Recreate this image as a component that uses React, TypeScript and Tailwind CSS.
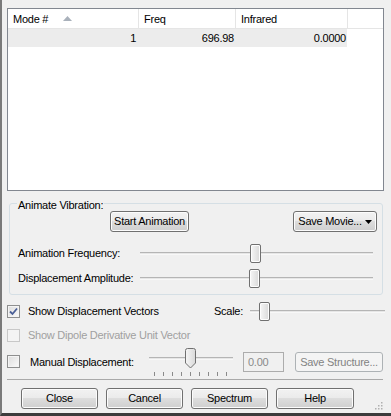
import React from "react";

const btn =
  "h-[21px] flex items-center justify-center rounded-[3px] border border-[#707070] bg-[linear-gradient(#f2f2f2_0%,#ebebeb_45%,#dddddd_50%,#cfcfcf_100%)] shadow-[inset_0_0_0_1px_#fcfcfc] text-black";

function Thumb({ left, pointed }: { left: number; pointed?: boolean }) {
  if (pointed) {
    return (
      <svg
        className="absolute top-[-9px]"
        style={{ left }}
        width="11"
        height="21"
        viewBox="0 0 11 21"
      >
        <defs>
          <linearGradient id="tg" x1="0" y1="0" x2="1" y2="0">
            <stop offset="0" stopColor="#f6f6f6" />
            <stop offset="1" stopColor="#d9d9d9" />
          </linearGradient>
        </defs>
        <path
          d="M0.5 2.5 Q0.5 0.5 2.5 0.5 H8.5 Q10.5 0.5 10.5 2.5 V15 L5.5 20 L0.5 15 Z"
          fill="url(#tg)"
          stroke="#707070"
        />
      </svg>
    );
  }
  return (
    <div
      className="absolute top-[-8px] w-[11px] h-[19px] rounded-[2px] border border-[#707070] bg-[linear-gradient(90deg,#f6f6f6,#d9d9d9)] shadow-[inset_0_0_0_1px_#fdfdfd]"
      style={{ left }}
    />
  );
}

function Slider({ width, thumb, pointed }: { width: number; thumb: number; pointed?: boolean }) {
  return (
    <div className="relative h-[3px] shrink-0" style={{ width }}>
      <div className="h-[3px] border-t border-[#b5b5b5] bg-[#e6e6e6] border-b border-b-[#f8f8f8]" />
      <Thumb left={thumb} pointed={pointed} />
    </div>
  );
}

function Check({ checked, disabled }: { checked?: boolean; disabled?: boolean }) {
  return (
    <div
      className={`w-[13px] h-[13px] border flex items-center justify-center ${
        disabled
          ? "border-[#c8c8c8] bg-[#f4f4f4]"
          : "border-[#8e8f8f] bg-[linear-gradient(135deg,#dcdcdc,#fbfbfb)] shadow-[inset_0_0_0_1px_#f4f4f4]"
      }`}
    >
      {checked && (
        <svg width="11" height="11" viewBox="0 0 11 11">
          <path d="M2 5.5 L4.5 8 L9 2.5" fill="none" stroke="#4a5f97" strokeWidth="1.8" />
        </svg>
      )}
    </div>
  );
}

export default function App() {
  return (
    <div className="relative w-[391px] h-[416px] bg-[#f0f0f0] border-l-2 border-l-[#7a7a7a] border-b-[3px] border-b-[#3c3c3c] flex flex-col text-[11px] tracking-[-0.25px] leading-none text-black font-['Liberation_Sans',Arial,sans-serif]">
      {/* mode list */}
      <div className="mt-[8px] ml-[5px] w-[377px] h-[183px] border border-[#828790] bg-white flex flex-col">
        <div className="h-[20px] flex border-b border-[#e5e5e5]">
          <div className="w-[131px] border-r border-[#e5e5e5] flex items-center pl-[5px] pt-[2px]">
            <span>Mode #</span>
            <svg className="ml-[15px] mb-[3px]" width="9" height="5" viewBox="0 0 9 5">
              <path d="M0 5 L4.5 0 L9 5 Z" fill="#a9b1bb" />
            </svg>
          </div>
          <div className="w-[97px] border-r border-[#e5e5e5] flex items-center pl-[5px] pt-[2px]">Freq</div>
          <div className="w-[112px] border-r border-[#e5e5e5] flex items-center pl-[5px] pt-[2px]">Infrared</div>
          <div className="flex-1" />
        </div>
        <div className="h-[18px] w-[339px] flex bg-[#ececec] items-center">
          <div className="w-[131px] text-right pr-[3px]">1</div>
          <div className="w-[97px] text-right pr-[2px]">696.98</div>
          <div className="w-[111px] text-right pr-[1px]">0.0000</div>
        </div>
      </div>

      {/* animate vibration group */}
      <div className="relative mt-[12px] ml-[7px] w-[374px] h-[92px] border border-[#d5dfe5] rounded-[3px] flex flex-col">
        <span className="absolute top-[-4px] left-[7px] bg-[#f0f0f0] px-[1px]">Animate Vibration:</span>
        <div className="mt-[7px] h-[21px] flex">
          <div className={`${btn} ml-[100px] w-[79px]`}>Start Animation</div>
          <div className={`${btn} ml-auto mr-[5px] w-[84px] gap-[3px]`}>
            <span>Save Movie...</span>
            <svg width="7" height="4" viewBox="0 0 7 4">
              <path d="M0 0 H7 L3.5 4 Z" fill="#000" />
            </svg>
          </div>
        </div>
        <div className="mt-[11px] h-[20px] flex items-center">
          <span className="ml-[8px] w-[122px]">Animation Frequency:</span>
          <Slider width={233} thumb={110} />
        </div>
        <div className="mt-[5px] h-[20px] flex items-center">
          <span className="ml-[8px] w-[122px]">Displacement Amplitude:</span>
          <Slider width={233} thumb={109} />
        </div>
      </div>

      {/* options */}
      <div className="mt-[6px] h-[20px] flex items-center">
        <div className="ml-[5px]">
          <Check checked />
        </div>
        <span className="ml-[8px]">Show Displacement Vectors</span>
        <span className="ml-auto mr-[7px]">Scale:</span>
        <div className="mr-[6px]">
          <Slider width={135} thumb={9} />
        </div>
      </div>
      <div className="mt-[4px] h-[20px] flex items-center text-[#a0a0a0]">
        <div className="ml-[5px]">
          <Check disabled />
        </div>
        <span className="ml-[8px]">Show Dipole Derivative Unit Vector</span>
      </div>
      <div className="mt-[4px] h-[30px] flex items-start">
        <div className="ml-[5px] mt-[6px]">
          <Check />
        </div>
        <span className="ml-[10px] mt-[8px] w-[119px] shrink-0">Manual Displacement:</span>
        <div className="mt-[8px] flex flex-col shrink-0">
          <Slider width={84} thumb={36} pointed />
          <div className="mt-[12px] ml-[5px] flex gap-[8px]">
            {[0, 1, 2, 3, 4, 5, 6, 7, 8].map((i) => (
              <div key={i} className="w-px h-[4px] bg-[#8a8a8a]" />
            ))}
          </div>
        </div>
        <div className="ml-[10px] mt-[3px] w-[41px] h-[20px] shrink-0 border border-[#acacac] bg-[#f0f0f0] flex items-center pl-[4px] text-[#8a8a8a]">
          0.00
        </div>
        <div className="ml-[11px] mt-[3px] w-[88px] h-[20px] shrink-0 rounded-[3px] border border-[#adb2b5] bg-[#f4f4f4] flex items-center justify-center text-[#838383]">
          Save Structure...
        </div>
      </div>
      <div className="ml-[5px] w-[376px] border-t border-[#a9a9a9]" />

      {/* dialog buttons */}
      <div className="mt-[8px] ml-[19px] flex gap-[8px]">
        <div className={`${btn} w-[77px]`}>Close</div>
        <div className={`${btn} w-[77px]`}>Cancel</div>
        <div className={`${btn} w-[77px]`}>Spectrum</div>
        <div className={`${btn} w-[78px]`}>Help</div>
      </div>

      {/* size grip */}
      <svg className="absolute right-[8px] bottom-[3px]" width="8" height="8" viewBox="0 0 8 8">
        {[
          [6, 0],
          [3, 3],
          [6, 3],
          [0, 6],
          [3, 6],
          [6, 6],
        ].map(([x, y], i) => (
          <rect key={i} x={x} y={y} width="1.5" height="1.5" fill="#b0b0b0" />
        ))}
      </svg>
    </div>
  );
}
